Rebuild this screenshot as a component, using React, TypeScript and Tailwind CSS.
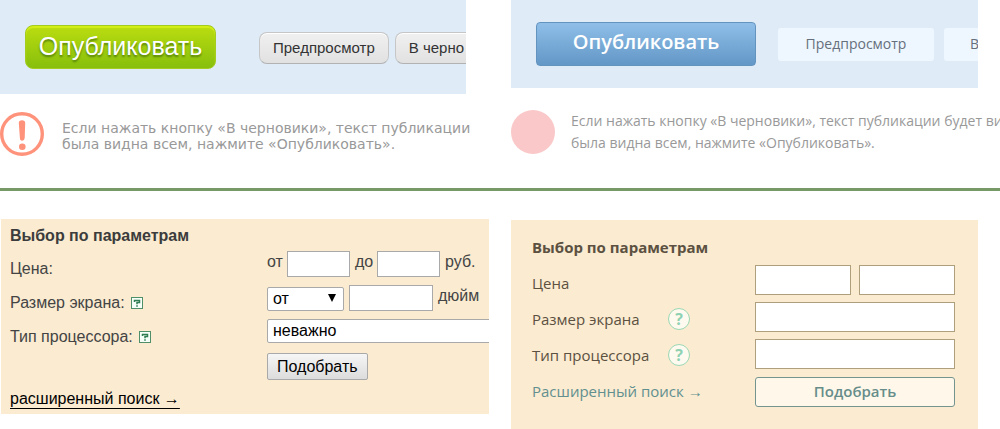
import React from 'react';

const classicButton =
  "mt-8 h-8 shrink-0 rounded-lg border border-[#c6c6c6] border-b-[#b2b2b2] bg-linear-to-b from-[#f0f0f0] to-[#e1e1e1] px-[13px] text-[15px] text-[#333] shadow-[inset_0_1px_0_#fff]";

function ClassicToolbar() {
  return (
    <div className="mr-[45px] flex h-[94px] items-start gap-[6px] overflow-hidden bg-[#dfebf7] pl-[25px] font-['Liberation_Sans',sans-serif]">
      <button
        type="button"
        className="mt-[25px] mr-[37px] h-11 w-[191px] shrink-0 rounded-lg border border-[#a3cb20] bg-linear-to-b from-[#bbdd10] to-[#87bf0c] text-[25px] text-white shadow-[inset_0_2px_1px_#d5ee18] text-shadow-[0_2px_2px_#55820a]"
      >
        Опубликовать
      </button>
      <button type="button" className={classicButton}>
        Предпросмотр
      </button>
      <button type="button" className={`${classicButton} w-[120px] text-left`}>
        В черно
      </button>
    </div>
  );
}

function ClassicNote() {
  return (
    <div className="mr-10 flex items-start gap-[18px] pt-[18px]">
      <svg viewBox="0 0 44 44" className="size-11 shrink-0" aria-hidden="true">
        <circle cx="22" cy="22" r="20.3" fill="none" stroke="#ff927b" strokeWidth="3.4" />
        <path d="M18.800 11Q18.800 8.200 22 8.200T25.200 11L24.700 26Q24.500 28.700 22.200 28.700T19.900 26Z" fill="#ff927b" />
        <circle cx="22.300" cy="34.700" r="3.300" fill="#ff927b" />
      </svg>
      <p className="pt-2 font-['DejaVu_Sans',sans-serif] text-[14px] leading-4 whitespace-nowrap text-[#999]">
        Если нажать кнопку «В черновики», текст публикации
        <br />
        была видна всем, нажмите «Опубликовать».
      </p>
    </div>
  );
}

const flatButton = 'mt-7 h-[33px] shrink-0 rounded-[3px] bg-[#eef7ff] px-[26px] pb-[2px] text-[14px] text-[#666f7c]';

function FlatToolbar() {
  return (
    <div className="mr-[22px] flex h-[88px] items-start gap-[10px] overflow-hidden bg-[#dfebf7] pl-[25px] font-['Open_Sans',sans-serif]">
      <button
        type="button"
        className="mt-[22px] mr-3 h-11 w-[220px] shrink-0 rounded-sm border border-[#6394c0] bg-linear-to-b from-[#8fbfe9] to-[#6397c6] pb-1 text-xl font-semibold text-white"
      >
        Опубликовать
      </button>
      <button type="button" className={`${flatButton} w-[156px]`}>
        Предпросмотр
      </button>
      <button type="button" className={flatButton}>
        В черновики
      </button>
    </div>
  );
}

function FlatNote() {
  return (
    <div className="flex items-start gap-4 overflow-hidden pt-[22px]">
      <span className="size-11 shrink-0 rounded-full bg-[#fac8c8]" />
      <p className="font-['Open_Sans',sans-serif] text-[14px] leading-[22px] whitespace-nowrap text-[#999]">
        Если нажать кнопку «В черновики», текст публикации будет ви
        <br />
        была видна всем, нажмите «Опубликовать».
      </p>
    </div>
  );
}

function SquareHelp() {
  return (
    <svg viewBox="0 0 12 12" className="size-3" aria-hidden="true">
      <rect x="0.5" y="0.5" width="11" height="11" fill="#f6fff8" stroke="#4f8f69" />
      <path d="M3.500 5V3.500H8.500V5.500H6V7.300M6 8.300V9.800" fill="none" stroke="#2f7d50" strokeWidth="1.500" />
    </svg>
  );
}

const classicRow = 'grid h-[34px] grid-cols-[257px_1fr] items-start';
const classicField = 'h-[26px] border border-[#a9a9a9] bg-white px-1';
const classicSelect =
  'h-6 appearance-none rounded-xs border border-[#a9a9a9] bg-white px-[5px] text-base leading-5 text-black';

function ClassicForm() {
  return (
    <form className="mr-[22px] ml-px overflow-hidden bg-[#faebd1] pb-[3px] pl-[9px] font-['Liberation_Sans',sans-serif] text-base whitespace-nowrap text-[#444]">
      <h2 className="h-8 text-base leading-[34px] font-bold text-[#3c3c3c]">Выбор по параметрам</h2>
      <div className={classicRow}>
        <label htmlFor="price-from" className="leading-9">Цена:</label>
        <div className="flex items-start gap-[5px] leading-[22px]">
          <span className="w-[15px]">от</span>
          <input id="price-from" className={`${classicField} w-[63px]`} />
          <span className="w-[17px]">до</span>
          <input aria-label="Цена до" className={`${classicField} w-[63px]`} />
          <span>руб.</span>
        </div>
      </div>
      <div className={classicRow}>
        <div className="flex items-center gap-[6px] leading-9">
          <label htmlFor="screen-mode">Размер экрана:</label>
          <SquareHelp />
        </div>
        <div className="flex items-start gap-[5px] leading-[22px]">
          <div className="relative mt-[2px]">
            <select id="screen-mode" className={`${classicSelect} w-[77px]`}>
              <option>от</option>
            </select>
            <svg viewBox="0 0 8 8" className="pointer-events-none absolute top-[7px] right-2 size-2" aria-hidden="true">
              <path d="M0 0H8L4 8Z" fill="#000" />
            </svg>
          </div>
          <input aria-label="Размер экрана" className={`${classicField} w-[84px]`} />
          <span>дюйм</span>
        </div>
      </div>
      <div className={classicRow}>
        <div className="flex items-center gap-[6px] leading-9">
          <label htmlFor="cpu">Тип процессора:</label>
          <SquareHelp />
        </div>
        <select id="cpu" className={`${classicSelect} w-[260px]`}>
          <option>неважно</option>
        </select>
      </div>
      <div className={classicRow}>
        <button
          type="button"
          className="col-start-2 h-[27px] justify-self-start rounded-xs border border-[#a9a9a9] bg-linear-to-b from-[#f6f6f6] to-[#dcdcdc] px-[9px] leading-6 text-black"
        >
          Подобрать
        </button>
      </div>
      <a href="#advanced" className="inline-block h-6 leading-6 text-black underline underline-offset-4">
        расширенный поиск →
      </a>
    </form>
  );
}

function RoundHelp() {
  return (
    <span className="flex size-[22px] items-center justify-center rounded-full border border-[#9bd8b5] bg-[#fffaf0] text-base leading-5 font-bold text-[#8fd2b3]">
      ?
    </span>
  );
}

const flatField = 'h-[30px] w-full min-w-0 border border-[#b09f7d] bg-white px-2';

function FlatForm() {
  return (
    <form className="mt-px mr-[22px] flex justify-between bg-[#faebd1] pt-[9px] pr-[23px] pb-5 pl-[21px] font-['Open_Sans',sans-serif] text-[15px] leading-9 whitespace-nowrap text-[#5c5141]">
      <div className="w-[180px]">
        <h2 className="font-bold">Выбор по параметрам</h2>
        <label htmlFor="flat-price" className="block">Цена</label>
        <div className="grid grid-cols-[136px_auto] items-center justify-start">
          <label htmlFor="flat-screen">Размер экрана</label>
          <RoundHelp />
          <label htmlFor="flat-cpu">Тип процессора</label>
          <RoundHelp />
        </div>
        <a href="#advanced-search" className="block text-[#62908f]">Расширенный поиск →</a>
      </div>
      <div className="flex w-[200px] flex-col gap-[7px] pt-9">
        <div className="flex gap-2">
          <input id="flat-price" className={flatField} />
          <input aria-label="Цена до" className={flatField} />
        </div>
        <input id="flat-screen" className={flatField} />
        <input id="flat-cpu" className={flatField} />
        <button
          type="button"
          className="mt-px h-[30px] rounded-[3px] border border-[#74958f] bg-[#fff8ea] pb-[2px] text-[15px] leading-6 font-semibold text-[#678d8b]"
        >
          Подобрать
        </button>
      </div>
    </form>
  );
}

export default function App() {
  return (
    <main className="overflow-hidden bg-white">
      <section className="grid min-h-[188px] grid-cols-[511fr_489fr]">
        <div className="min-w-0">
          <ClassicToolbar />
          <ClassicNote />
        </div>
        <div className="min-w-0">
          <FlatToolbar />
          <FlatNote />
        </div>
      </section>
      <hr className="border-t-3 border-[#779966]" />
      <section className="grid grid-cols-[511fr_489fr] items-start pt-7">
        <div className="min-w-0">
          <ClassicForm />
        </div>
        <div className="min-w-0">
          <FlatForm />
        </div>
      </section>
    </main>
  );
}
